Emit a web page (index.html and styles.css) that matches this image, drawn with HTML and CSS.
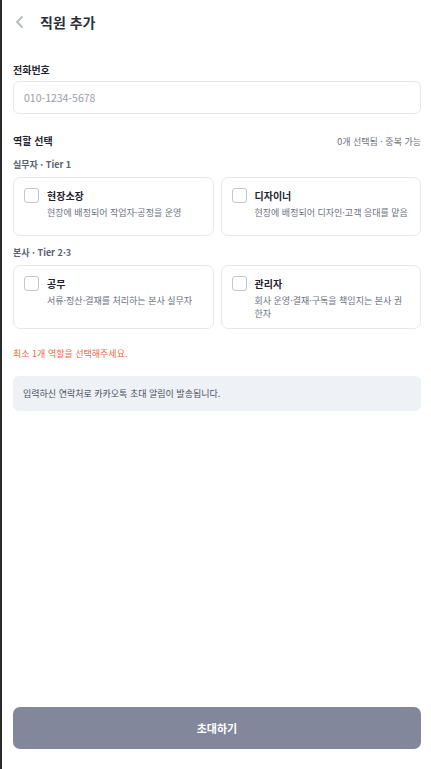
FILE: index.html
```html
<!DOCTYPE html>
<html lang="ko">
<head>
<meta charset="UTF-8" />
<meta name="viewport" content="width=device-width, initial-scale=1" />
<title>직원 추가</title>
<link rel="stylesheet" href="styles.css">
</head>
<body>

<div class="page">
  <div class="header">
    <span class="back">
      <svg width="9" height="12" viewBox="0 0 9 12"><path d="M7 1 L2 6 L7 11" fill="none" stroke="#b7bbc6" stroke-width="1.8" stroke-linecap="round" stroke-linejoin="round"/></svg>
    </span>
    <h1>직원 추가</h1>
  </div>

  <div class="content">
    <div class="field">
      <label class="label">전화번호</label>
      <input class="input" type="text" placeholder="010-1234-5678">
    </div>

    <div class="section-head">
      <span class="label">역할 선택</span>
      <span class="counter">0개 선택됨 · 중복 가능</span>
    </div>

    <div class="group-label">실무자 · Tier 1</div>
    <div class="role-grid">
      <div class="role-card">
        <span class="check"></span>
        <div class="role-info">
          <div class="role-name">현장소장</div>
          <div class="role-desc">현장에 배정되어 작업자·공정을 운영</div>
        </div>
      </div>
      <div class="role-card">
        <span class="check"></span>
        <div class="role-info">
          <div class="role-name">디자이너</div>
          <div class="role-desc">현장에 배정되어 디자인·고객 응대를 맡음</div>
        </div>
      </div>
    </div>

    <div class="group-label second">본사 · Tier 2·3</div>
    <div class="role-grid">
      <div class="role-card">
        <span class="check"></span>
        <div class="role-info">
          <div class="role-name">공무</div>
          <div class="role-desc">서류·정산·결재를 처리하는 본사 실무자</div>
        </div>
      </div>
      <div class="role-card">
        <span class="check"></span>
        <div class="role-info">
          <div class="role-name">관리자</div>
          <div class="role-desc">회사 운영·결재·구독을 책임지는 본사 권한자</div>
        </div>
      </div>
    </div>

    <p class="error">최소 1개 역할을 선택해주세요.</p>

    <div class="notice">입력하신 연락처로 카카오톡 초대 알림이 발송됩니다.</div>
  </div>

  <div class="footer">
    <button class="btn-invite">초대하기</button>
  </div>
</div>

</body>
</html>
```

FILE: styles.css
```css
* {
  box-sizing: border-box;
}
body {
  margin: 0;
  font-family: "Noto Sans CJK KR", "Noto Sans", sans-serif;
  background-color: #ffffff;
  color: #1f2430;
  border-left: 2px solid #2b2b2b;
}
.page {
  height: 100vh;
  display: flex;
  flex-direction: column;
  padding: 0 10px 0 11px;
}

/* Header */
.header {
  height: 44px;
  display: flex;
  align-items: center;
}
.back {
  width: 27px;
  padding-left: 2px;
  display: flex;
  align-items: center;
}
.header h1 {
  margin: 0;
  font-size: 14px;
  font-weight: 700;
  color: #2a2f3a;
}

/* Content */
.content {
  flex-grow: 1;
  padding-top: 18px;
}
.label {
  display: block;
  font-size: 10px;
  font-weight: 700;
  line-height: 16px;
  color: #1f2430;
}
.field .label {
  margin-bottom: 3px;
}
.input {
  width: 100%;
  height: 33px;
  border: 1px solid #e6e8ec;
  border-radius: 6px;
  padding: 0 10px;
  font-family: inherit;
  font-size: 10.5px;
  color: #1f2430;
  outline: none;
}
.input::placeholder {
  color: #9a9ea8;
}
.section-head {
  margin-top: 19px;
  display: flex;
  justify-content: space-between;
  align-items: center;
}
.counter {
  font-size: 9px;
  color: #6b7180;
}
.group-label {
  margin-top: 8px;
  font-size: 9px;
  font-weight: 600;
  line-height: 16px;
  color: #5a6170;
}
.group-label.second {
  margin-top: 9px;
}
.role-grid {
  margin-top: 4px;
  display: grid;
  grid-template-columns: 1fr 1fr;
  gap: 7px;
  margin-bottom: 4px;
}
.role-card {
  min-height: 59px;
  border: 1px solid #e6e8ec;
  border-radius: 7px;
  padding: 9px 10px 8px;
  display: flex;
  align-items: flex-start;
  gap: 8px;
}
.check {
  flex-shrink: 0;
  width: 15px;
  height: 15px;
  margin-top: 1px;
  border: 1.5px solid #c3c7d1;
  border-radius: 3px;
}
.role-name {
  font-size: 10px;
  font-weight: 700;
  line-height: 17px;
  color: #1f2430;
}
.role-desc {
  margin-top: 2px;
  font-size: 9px;
  line-height: 13px;
  color: #6b7180;
}
.error {
  margin: 18px 0 0;
  font-size: 9px;
  line-height: 14px;
  color: #f2693f;
}
.notice {
  margin-top: 15px;
  height: 35px;
  background-color: #eef1f5;
  border-radius: 6px;
  padding: 0 10px;
  display: flex;
  align-items: center;
  font-size: 9px;
  color: #4a5060;
}

/* Footer */
.footer {
  padding-bottom: 20px;
}
.btn-invite {
  width: 100%;
  height: 42px;
  border: none;
  border-radius: 7px;
  background-color: #82879c;
  color: #ffffff;
  font-family: inherit;
  font-size: 11px;
  font-weight: 700;
}
```
